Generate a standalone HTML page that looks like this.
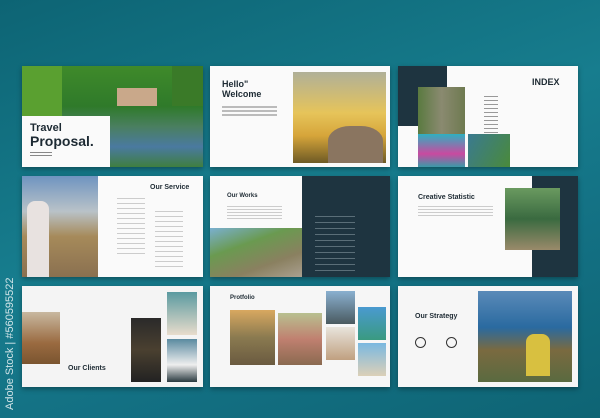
<!DOCTYPE html>
<html><head><style>
body{margin:0;width:600px;height:418px;overflow:hidden;background:linear-gradient(160deg,#0d6474 0%,#177d8e 45%,#137083 70%,#0e6474 100%);font-family:"Liberation Sans",sans-serif;position:relative}
.a{position:absolute}
.s{position:absolute;background:#f4f4f4;box-shadow:0 2px 5px rgba(0,0,0,.35);overflow:hidden}
.t{position:absolute;color:#1d2a33;font-weight:bold}
.l{position:absolute;height:1.5px;background:#bbb}
.dk{background:#1e3440}
</style></head><body>
<!-- row1 -->
<div class="s" style="left:22px;top:66px;width:181px;height:101px;background:linear-gradient(180deg,#3f8a2a 0%,#2f7a2a 40%,#4a7f60 60%,#4a7aa0 80%,#3f7e40 100%)">
 <div class="a" style="left:0;top:0;width:40px;height:55px;background:#5aa030"></div>
 <div class="a" style="left:95px;top:22px;width:40px;height:18px;background:#c9a88a"></div>
 <div class="a" style="left:150px;top:0;width:31px;height:40px;background:#3a7a28"></div>
 <div class="a" style="left:0;top:50px;width:88px;height:51px;background:#fafafa"></div>
 <div class="t" style="left:8px;top:56px;font-size:11px">Travel</div>
 <div class="t" style="left:8px;top:67px;font-size:14px">Proposal.</div>
 <div class="l" style="left:8px;top:86px;width:22px;background:#888;height:1px"></div>
 <div class="l" style="left:8px;top:89px;width:22px;background:#888;height:1px"></div>
</div>
<div class="s" style="left:210px;top:66px;width:180px;height:101px;background:#fafafa">
 <div class="a" style="left:83px;top:6px;width:93px;height:91px;background:linear-gradient(180deg,#b0b098 0%,#e6c45a 45%,#d6a53a 70%,#6e5a25 100%)"></div>
 <div class="a" style="left:118px;top:60px;width:55px;height:37px;background:#8a7560;border-radius:40% 40% 0 0"></div>
 <div class="t" style="left:12px;top:13px;font-size:9px;line-height:10px">Hello"<br>Welcome</div>
 <div class="l" style="left:12px;top:40px;width:55px"></div><div class="l" style="left:12px;top:44px;width:55px"></div><div class="l" style="left:12px;top:48px;width:55px"></div>
</div>
<div class="s" style="left:398px;top:66px;width:180px;height:101px;background:#fafafa">
 <div class="a dk" style="left:0;top:0;width:49px;height:60px"></div>
 <div class="a" style="left:20px;top:21px;width:47px;height:47px;background:linear-gradient(90deg,#5a7a40,#8a8a70,#6e7a50)"></div>
 <div class="a" style="left:20px;top:68px;width:47px;height:33px;background:linear-gradient(180deg,#2fb0c0,#c94aa0 60%,#3a9aa8)"></div>
 <div class="a" style="left:70px;top:68px;width:42px;height:33px;background:linear-gradient(120deg,#3a7a90,#4a8a3a)"></div>
 <div class="t" style="left:134px;top:11px;font-size:9px">INDEX</div>
 <div class="a" style="left:86px;top:30px;width:14px;height:40px;background:repeating-linear-gradient(180deg,#999 0 1px,transparent 1px 4px)"></div>
</div>
<!-- row2 -->
<div class="s" style="left:22px;top:176px;width:181px;height:101px;background:#fafafa">
 <div class="a" style="left:0;top:0;width:76px;height:101px;background:linear-gradient(180deg,#6f94c0 0%,#b9c2c8 35%,#a68a5a 60%,#8a7050 100%)"></div>
 <div class="a" style="left:5px;top:25px;width:22px;height:76px;background:#e8e2e0;border-radius:8px 8px 0 0"></div>
 <div class="t" style="left:128px;top:8px;font-size:7px">Our Service</div>
 <div class="a" style="left:95px;top:22px;width:28px;height:60px;background:repeating-linear-gradient(180deg,#ccc 0 1px,transparent 1px 5px)"></div>
 <div class="a" style="left:133px;top:35px;width:28px;height:60px;background:repeating-linear-gradient(180deg,#ccc 0 1px,transparent 1px 5px)"></div>
</div>
<div class="s" style="left:210px;top:176px;width:180px;height:101px;background:#fafafa">
 <div class="a dk" style="left:92px;top:0;width:88px;height:101px"></div>
 <div class="a" style="left:0;top:52px;width:92px;height:49px;background:linear-gradient(160deg,#7ab0d0 0%,#6a9a50 35%,#8a8060 70%,#aaa090 100%)"></div>
 <div class="t" style="left:17px;top:17px;font-size:6px">Our Works</div>
 <div class="a" style="left:17px;top:30px;width:55px;height:14px;background:repeating-linear-gradient(180deg,#ccc 0 1px,transparent 1px 3px)"></div>
 <div class="a" style="left:105px;top:40px;width:40px;height:60px;background:repeating-linear-gradient(180deg,#5a6e78 0 1px,transparent 1px 6px)"></div>
</div>
<div class="s" style="left:398px;top:176px;width:180px;height:101px;background:#fafafa">
 <div class="a dk" style="left:134px;top:0;width:46px;height:101px"></div>
 <div class="a" style="left:107px;top:12px;width:55px;height:62px;background:linear-gradient(180deg,#6a9a60,#3a6a40 50%,#9a8a6a)"></div>
 <div class="t" style="left:20px;top:18px;font-size:7px">Creative Statistic</div>
 <div class="a" style="left:20px;top:30px;width:75px;height:10px;background:repeating-linear-gradient(180deg,#ccc 0 1px,transparent 1px 3px)"></div>
</div>
<!-- row3 -->
<div class="s" style="left:22px;top:286px;width:181px;height:101px;background:#f4f4f4">
 <div class="a" style="left:0;top:26px;width:38px;height:52px;background:linear-gradient(180deg,#c8b8a0,#9a6a40 60%,#7a5530)"></div>
 <div class="a" style="left:109px;top:32px;width:30px;height:64px;background:linear-gradient(180deg,#2a2a2a,#4a4030 50%,#222)"></div>
 <div class="a" style="left:145px;top:6px;width:30px;height:43px;background:linear-gradient(180deg,#5a9aa0,#e8dccc)"></div>
 <div class="a" style="left:145px;top:53px;width:30px;height:43px;background:linear-gradient(180deg,#5a8aa0,#eee 60%,#2a3a40)"></div>
 <div class="t" style="left:46px;top:79px;font-size:7px">Our Clients</div>
</div>
<div class="s" style="left:210px;top:286px;width:180px;height:101px;background:#f6f6f6">
 <div class="t" style="left:20px;top:9px;font-size:6px">Protfolio</div>
 <div class="a" style="left:20px;top:24px;width:45px;height:55px;background:linear-gradient(180deg,#d8a860,#8a7a50 50%,#6a5a40)"></div>
 <div class="a" style="left:68px;top:27px;width:44px;height:52px;background:linear-gradient(180deg,#b8c090,#c08070 50%,#8a6a50)"></div>
 <div class="a" style="left:116px;top:5px;width:29px;height:33px;background:linear-gradient(180deg,#8ab0d0,#4a5a60)"></div>
 <div class="a" style="left:116px;top:41px;width:29px;height:33px;background:linear-gradient(180deg,#e8e4dc,#c0a080)"></div>
 <div class="a" style="left:148px;top:21px;width:28px;height:33px;background:linear-gradient(180deg,#4a9ad0,#3a9a80)"></div>
 <div class="a" style="left:148px;top:57px;width:28px;height:33px;background:linear-gradient(180deg,#7ab8e0,#dcd0b8)"></div>
</div>
<div class="s" style="left:398px;top:286px;width:180px;height:101px;background:#f6f6f6">
 <div class="a" style="left:80px;top:5px;width:94px;height:91px;background:linear-gradient(180deg,#5a8ab8 0%,#2a6aa0 40%,#7a6a40 65%,#5a6a40 100%)"></div>
 <div class="a" style="left:128px;top:48px;width:24px;height:42px;background:#d8c040;border-radius:8px 8px 0 0"></div>
 <div class="t" style="left:17px;top:27px;font-size:7px">Our Strategy</div>
 <div class="a" style="left:17px;top:51px;width:9px;height:9px;border:1.5px solid #333;border-radius:50%"></div>
 <div class="a" style="left:48px;top:51px;width:9px;height:9px;border:1.5px solid #333;border-radius:50%"></div>
</div>
<div class="a" style="left:4px;top:410px;transform:rotate(-90deg);transform-origin:0 0;color:rgba(255,255,255,.8);font-size:11px;white-space:nowrap">Adobe Stock | #560595522</div>
</body></html>
